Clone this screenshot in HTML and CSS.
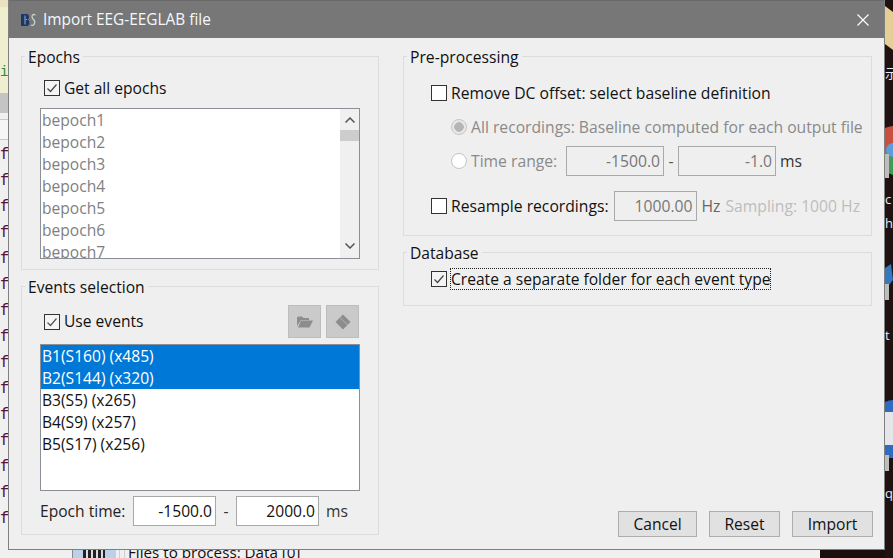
FILE: index.html
```html
<!DOCTYPE html>
<html lang="en">
<head>
<meta charset="utf-8">
<title>Import EEG-EEGLAB file</title>
<link rel="stylesheet" href="styles.css">
</head>
<body>
<div class="desk">
  <div class="win-left">
    <div class="cream"><span class="code-i">i</span></div>
    <div class="graybar"></div>
    <div class="codes">
      <span>f</span><span>f</span><span>f</span><span>f</span><span>f</span>
      <span>f</span><span>f</span><span>f</span><span>f</span><span>f</span>
      <span>f</span><span>f</span><span>f</span><span>f</span><span>f</span>
    </div>
  </div>
  <div class="win-bottom">
    <div class="bottom-icon"></div>
    <div class="bottom-box"></div>
    <div class="bottom-text">Files to process: Data [0]</div>
  </div>
  <div class="icons">
    <svg class="icons-svg" width="8" height="558" viewBox="0 0 8 558">
      <path d="M0 6 L8 12 V50 L0 44Z" fill="#e5cf96"/>
      <path d="M0 128 A25 25 0 0 1 8 126 V150 H0Z" fill="#c9503f"/>
      <path d="M0 150 H8 V175 L0 172Z" fill="#3f9a55"/>
      <circle cx="8" cy="150" r="7" fill="#5c9bdc"/>
      <rect x="0" y="154" width="4" height="24" fill="#bdbdbd"/>
      <path d="M0 268 L6 264 L8 280 L0 290Z" fill="#3478c0"/>
      <rect x="0" y="284" width="4" height="16" fill="#bdbdbd"/>
      <path d="M0 402 Q4 400 8 400 V458 H0Z" fill="#2f6cc0"/>
      <path d="M0 412 H8 V445 H0Z" fill="#e4e6ea"/>
      <rect x="0" y="455" width="4" height="16" fill="#bdbdbd"/>
    </svg>
    <span class="d-t d-1">示</span><span class="d-t d-2">c</span><span class="d-t d-3">h</span><span class="d-t d-4">t</span><span class="d-t d-5">q</span>
  </div>
</div>

<div class="dialog">
  <header class="titlebar">
    <svg class="logo" width="16" height="14" viewBox="0 0 16 14">
      <path d="M0 1 H6 Q8 1 8 3.500 Q8 5.500 7 6.500 Q8.500 7.500 8.500 10 Q8 13 5.500 13 H0Z" fill="#1d3868"/>
      <path d="M4 2.500 V11.500 M4.500 6.500 H6" stroke="#9aa9c0" stroke-width="1"/>
      <path d="M14.500 2 Q11.500 0.500 11 3.500 Q11 5.500 13 7 Q14.500 9 13 11.500 Q11.500 13 10 12" fill="none" stroke="#c3d3c8" stroke-width="1.300"/>
    </svg>
    <span class="title">Import EEG-EEGLAB file</span>
    <svg class="close" width="12" height="12" viewBox="0 0 12 12">
      <path d="M0.500 0.500 L11.500 11.500 M11.500 0.500 L0.500 11.500" stroke="#fff" stroke-width="1.100"/>
    </svg>
  </header>

  <main class="content">
    <div class="col">
      <fieldset class="panel epochs">
        <legend>Epochs</legend>
        <label class="check-row">
          <span class="box checked"><svg width="14" height="14" viewBox="0 0 14 14"><path d="M2.500 7.500 L5.500 10.500 L11.500 3.500" fill="none" stroke="#444" stroke-width="1.200"/></svg></span>
          <span>Get all epochs</span>
        </label>
        <div class="list list-epochs">
          <ul class="rows rows-off">
            <li>bepoch1</li><li>bepoch2</li><li>bepoch3</li><li>bepoch4</li><li>bepoch5</li><li>bepoch6</li><li>bepoch7</li>
          </ul>
          <div class="scroll">
            <svg class="arrow" width="10" height="6" viewBox="0 0 10 6"><path d="M0.500 5.500 L5 1 L9.500 5.500" fill="none" stroke="#555" stroke-width="1.500"/></svg>
            <div class="thumb"></div>
            <svg class="arrow arrow-down" width="10" height="6" viewBox="0 0 10 6"><path d="M0.500 0.500 L5 5 L9.500 0.500" fill="none" stroke="#555" stroke-width="1.500"/></svg>
          </div>
        </div>
      </fieldset>

      <fieldset class="panel events">
        <legend>Events selection</legend>
        <div class="events-head">
          <label class="check-row">
            <span class="box checked"><svg width="14" height="14" viewBox="0 0 14 14"><path d="M2.500 7.500 L5.500 10.500 L11.500 3.500" fill="none" stroke="#555" stroke-width="1.200"/></svg></span>
            <span>Use events</span>
          </label>
          <div class="tools">
            <button class="tool" type="button">
              <svg width="16" height="12" viewBox="0 0 16 12"><path d="M0 2 Q0 0.500 1.500 0.500 H5 L6.500 2 H12 V4 H4 L0 10Z M1 11.500 L4 4.500 H16 L12.500 11.500Z" fill="#8d8d8d"/></svg>
            </button>
            <button class="tool" type="button">
              <svg width="16" height="16" viewBox="0 0 16 16"><path d="M8 0.500 L15.500 8 L8 15.500 L0.500 8Z" fill="#8d8d8d"/><path d="M5 3.500 L12.500 11" stroke="#b5b5b5" stroke-width="1"/></svg>
            </button>
          </div>
        </div>
        <div class="list list-events">
          <ul class="rows">
            <li class="sel">B1(S160) (x485)</li>
            <li class="sel">B2(S144) (x320)</li>
            <li>B3(S5) (x265)</li>
            <li>B4(S9) (x257)</li>
            <li>B5(S17) (x256)</li>
          </ul>
        </div>
        <div class="time-row">
          <span class="time-label">Epoch time:</span>
          <span class="field field-w">-1500.0</span>
          <span class="dash">-</span>
          <span class="field field-w">2000.0</span>
          <span class="unit">ms</span>
        </div>
      </fieldset>
    </div>

    <div class="col">
      <fieldset class="panel pre">
        <legend>Pre-processing</legend>
        <label class="check-row dc">
          <span class="box"></span>
          <span>Remove DC offset: select baseline definition</span>
        </label>
        <div class="radio-row all">
          <span class="radio on"></span>
          <span class="off">All recordings: Baseline computed for each output file</span>
        </div>
        <div class="radio-row range">
          <span class="radio"></span>
          <span class="off range-label">Time range:</span>
          <span class="field field-d wide">-1500.0</span>
          <span class="dash-d">-</span>
          <span class="field field-d wide">-1.0</span>
          <span class="unit-d">ms</span>
        </div>
        <div class="resample">
          <label class="check-row">
            <span class="box"></span>
            <span class="res-label">Resample recordings:</span>
          </label>
          <span class="field field-d rate">1000.00</span>
          <span class="hz">Hz</span>
          <span class="sampling">Sampling: 1000 Hz</span>
        </div>
      </fieldset>

      <fieldset class="panel db">
        <legend>Database</legend>
        <label class="check-row">
          <span class="box checked"><svg width="14" height="14" viewBox="0 0 14 14"><path d="M2.500 7.500 L5.500 10.500 L11.500 3.500" fill="none" stroke="#444" stroke-width="1.200"/></svg></span>
          <span class="focus">Create a separate folder for each event type</span>
        </label>
      </fieldset>

      <footer class="actions">
        <button class="btn b-cancel" type="button">Cancel</button>
        <button class="btn b-reset" type="button">Reset</button>
        <button class="btn b-import" type="button">Import</button>
      </footer>
    </div>
  </main>
</div>
</body>
</html>
```
FILE: styles.css
```css
* { box-sizing: border-box; }
html, body { margin: 0; padding: 0; }
body {
  width: 893px;
  height: 558px;
  overflow: hidden;
  position: relative;
  background: #1a0f0c;
  font-family: "Open Sans", "Noto Sans", sans-serif;
  font-size: 15.600px;
  color: #111;
}
.desk { position: absolute; inset: 0; }
.win-left { position: absolute; left: 0; top: 0; width: 9px; height: 558px; background: #f0f0f0; overflow: hidden; }
.cream { height: 93px; background: #efefcf; position: relative; border-top: 7px solid #e8e2c0; }
.code-i { position: absolute; left: 0; top: 57px; font: 14px/16px "Liberation Mono", monospace; color: #2d8a3a; }
.graybar { height: 20px; background: #c4c4c4; }
.codes { display: flex; flex-direction: column; padding-top: 26px; border-top: 3px solid #f0f0f0; position: relative; }
.codes::before { content: ""; position: absolute; left: 0; right: 0; top: 3px; height: 19px; background: #f6f6f6; border-top: 1px solid #c8c8c8; border-bottom: 1px solid #c8c8c8; }
.codes span { height: 26px; font: 16px/26.100px "Liberation Mono", monospace; color: #5a0f3c; }
.win-bottom { position: absolute; left: 0; top: 549px; width: 820px; height: 9px; background: #f0f0f0; display: flex; overflow: hidden; }
.bottom-icon { width: 44px; height: 9px; margin-left: 72px; background: #b9d2ea; border-left: 1px solid #8a8a8a; position: relative; flex: none; }
.bottom-icon::after { content: ""; position: absolute; left: 10px; top: 0; width: 22px; height: 9px; background: repeating-linear-gradient(90deg, #222 0 3px, #ddd 3px 5px); }
.bottom-box { width: 6px; height: 9px; margin-left: 3px; border: 1px solid #cfcfcf; border-bottom: 0; flex: none; }
.bottom-text { margin-left: 3px; font-size: 15.200px; line-height: 7px; color: #111; white-space: nowrap; height: 9px; }
.icons { position: absolute; left: 885px; top: 0; width: 8px; height: 558px; overflow: hidden; background: #1f1210; }
.icons-svg { display: block; }
.d-t { position: absolute; left: 0; color: #e8eef5; font-size: 13px; line-height: 14px; }
.d-1 { top: 66px; left: 0; font-family: "Noto Sans CJK SC", sans-serif; }
.d-2 { top: 192px; }
.d-3 { top: 216px; }
.d-4 { top: 328px; }
.d-5 { top: 486px; }

.dialog {
  position: absolute;
  left: 8px;
  top: 0;
  width: 877px;
  height: 550px;
  background: #efefef;
  border: 1px solid #808080;
  border-top: 0;
  display: flex;
  flex-direction: column;
}
.titlebar {
  height: 38px;
  flex: none;
  background: #777;
  border-top: 1px solid #6a6a6a;
  display: flex;
  align-items: center;
  padding: 0 15px 0 12px;
  color: #f4f8fc;
}
.logo { flex: none; }
.title { margin-left: 6px; font-size: 15.400px; }
.close { margin-left: auto; }

.content {
  flex: 1;
  display: grid;
  grid-template-columns: 358px 469px;
  column-gap: 24px;
  padding: 8px 12px 11px 12px;
}
.col { display: flex; flex-direction: column; }

.panel {
  margin: 0;
  padding: 0 18px;
  border: 1px solid #dcdcdc;
  min-width: 0;
}
.panel legend {
  margin-left: -15px;
  padding: 0 3px;
  line-height: 22px;
  height: 20px;
  color: #111;
}
.pre legend, .db legend { margin-left: -24px; }
.epochs { height: 224px; padding-top: 11px; }
.events { height: 259px; margin-top: 6px; padding-top: 9px; }
.pre { height: 190px; padding: 16px 0 0 27px; font-size: 15.700px; }
.db { height: 64px; margin-top: 6px; padding: 6px 0 0 27px; }

.check-row { display: flex; align-items: center; gap: 4px; height: 22px; margin-left: 4px; }
.pre .check-row, .db .check-row { margin-left: 0; }
.box {
  width: 16px; height: 16px; flex: none;
  background: #fff;
  border: 1px solid #333;
  display: flex; align-items: center; justify-content: center;
}
.box.checked { background: #f4f4f4; }

.list { background: #fff; border: 1px solid #8c8f96; margin-top: 9px; display: flex; overflow: hidden; }
.list-epochs { height: 151px; }
.list-events { height: 147px; margin-top: 6px; }
.rows { list-style: none; margin: 0; padding: 0; flex: 1; min-width: 0; }
.rows li { height: 22px; line-height: 23px; padding-left: 1px; white-space: nowrap; }
.rows-off li { color: #808080; }
.rows .sel { background: #0078d7; color: #fff; }
.scroll { width: 19px; flex: none; background: #f0f0f0; display: flex; flex-direction: column; align-items: center; position: relative; }
.arrow { margin-top: 8px; flex: none; }
.thumb { width: 19px; height: 11px; background: #cdcdcd; margin-top: 7px; }
.arrow-down { margin-top: auto; margin-bottom: 9px; }

.events-head { display: flex; align-items: center; justify-content: space-between; height: 33px; }
.events-head .check-row span:last-child { position: relative; top: -1px; }
.tools { display: flex; gap: 5px; margin-right: 1px; }
.tool { width: 33px; height: 33px; padding: 0; background: #cacaca; border: 1px solid #bdbdbd; display: flex; align-items: center; justify-content: center; }

.field {
  height: 30px;
  display: flex; align-items: center; justify-content: flex-end;
  padding-right: 3px;
  border: 1px solid #a9a9a9;
}
.field-w { width: 83px; background: #fff; color: #111; }
.field-d { color: #777; background: #efefef; }
.wide { width: 98px; }
.rate { width: 83px; }
.time-row { display: flex; align-items: center; margin-top: 5px; }
.time-label { width: 93px; color: #222; }
.dash { width: 20px; text-align: center; color: #333; }
.unit { margin-left: 7px; color: #333; }

.radio-row { display: flex; align-items: center; margin-left: 20px; }
.radio {
  width: 16px; height: 16px; flex: none; border-radius: 50%;
  background: #fff; border: 1px solid #c4c4c4; margin-right: 4px;
}
.radio.on { background: radial-gradient(circle, #b5b5b5 0 4.500px, #e8e8e8 5px); }
.off { color: #8a8a8a; white-space: nowrap; }
.all { height: 22px; margin-top: 12px; }
.range { height: 30px; margin-top: 8px; }
.range-label { width: 95px; }
.dash-d { width: 14px; text-align: center; color: #555; }
.unit-d { margin-left: 4px; color: #333; }
.resample { display: flex; align-items: center; height: 30px; margin-top: 15px; }
.res-label { white-space: nowrap; }
.resample .rate { margin-left: 5px; }
.hz { margin-left: 5px; color: #666; }
.sampling { margin-left: 5px; color: #bdbdbd; white-space: nowrap; }
.focus { outline: 1px dotted #222; outline-offset: 0; line-height: 20px; white-space: nowrap; }

.actions { display: flex; justify-content: flex-end; gap: 12px; margin: auto -1px 1px 0; }
.btn {
  height: 26px; padding: 0;
  background: #e1e1e1; border: 1px solid #adadad;
  font: inherit; color: #111;
}
.b-cancel { width: 79px; }
.b-reset { width: 71px; }
.b-import { width: 81px; }
```
